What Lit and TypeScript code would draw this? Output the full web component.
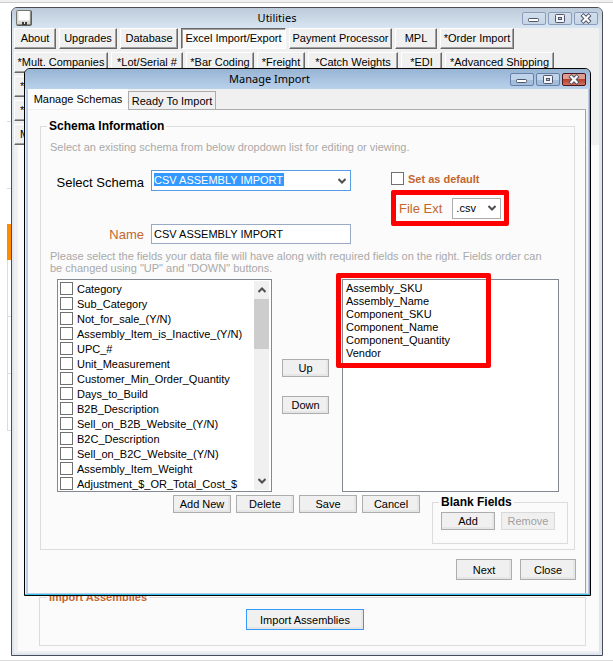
import { LitElement, html, css, svg } from "lit";
import { customElement, property } from "lit/decorators.js";

const toolbarRows: { label: string; width: number; active?: boolean }[][] = [
  [
    { label: "About", width: 42 },
    { label: "Upgrades", width: 58 },
    { label: "Database", width: 58 },
    { label: "Excel Import/Export", width: 105, active: true },
    { label: "Payment Processor", width: 103 },
    { label: "MPL", width: 42 },
    { label: "*Order Import", width: 74 },
  ],
  [
    { label: "*Mult. Companies", width: 94 },
    { label: "*Lot/Serial #", width: 72 },
    { label: "*Bar Coding", width: 68 },
    { label: "*Freight", width: 48 },
    { label: "*Catch Weights", width: 90 },
    { label: "*EDI", width: 41 },
    { label: "*Advanced Shipping", width: 109 },
  ],
  [{ label: "*", width: 80 }],
  [{ label: "*", width: 80 }],
  [{ label: "M", width: 80 }],
];

const availableFields = [
  "Category",
  "Sub_Category",
  "Not_for_sale_(Y/N)",
  "Assembly_Item_is_Inactive_(Y/N)",
  "UPC_#",
  "Unit_Measurement",
  "Customer_Min_Order_Quantity",
  "Days_to_Build",
  "B2B_Description",
  "Sell_on_B2B_Website_(Y/N)",
  "B2C_Description",
  "Sell_on_B2C_Website_(Y/N)",
  "Assembly_Item_Weight",
  "Adjustment_$_OR_Total_Cost_$",
];

const requiredFields = [
  "Assembly_SKU",
  "Assembly_Name",
  "Component_SKU",
  "Component_Name",
  "Component_Quantity",
  "Vendor",
];

const base = css`
  * {
    box-sizing: border-box;
  }
  button,
  input,
  select {
    font: inherit;
    color: inherit;
    margin: 0;
    border-radius: 0;
  }
  button {
    padding: 0;
    white-space: nowrap;
  }
  fieldset {
    margin: 0;
    padding: 0;
    min-width: 0;
    border: 1px solid #dcdcdc;
  }
  legend {
    padding: 0 2px;
    font-weight: bold;
    font-size: 12px;
    line-height: 14px;
  }
  .btn {
    height: 18px;
    width: 58px;
    border: 1px solid #adadad;
    background: #f0f0f0;
    box-shadow: inset -2px -2px 0 #e6e6e6;
    color: #000;
    font-size: 11px;
    line-height: 16px;
  }
  .btn:disabled {
    color: #a0a0a0;
    border-color: #d9d9d9;
    box-shadow: none;
  }
`;

@customElement("window-controls")
export class WindowControls extends LitElement {
  @property({ type: Boolean }) active = false;

  static styles = [
    base,
    css`
      :host {
        display: flex;
        gap: 2px;
      }
      button {
        width: 24px;
        height: 13px;
        border: 1px solid #8c9cbc;
        border-radius: 2px;
        background: linear-gradient(#d3dfec, #c6d5e6);
        display: block;
      }
      :host([active]) button {
        border-color: #6781a8;
        background: linear-gradient(#bfd3ea 50%, #a3bddb 50%);
      }
      :host([active]) button.close {
        border-color: #4a1420;
        background: linear-gradient(#dc9c90 45%, #b8412c 50%, #d0725c);
      }
      svg {
        display: block;
        width: 22px;
        height: 11px;
      }
    `,
  ];

  render() {
    const icon = (shape: unknown) =>
      html`<svg viewBox="0 0 22 11" aria-hidden="true">${shape}</svg>`;
    return html`
      <button aria-label="Minimize">
        ${icon(svg`<rect x="5.5" y="5.5" width="10" height="3" rx="0.8" fill="#fff" stroke="#50566a"/>`)}
      </button>
      <button aria-label="Maximize">
        ${icon(svg`<rect x="6.5" y="1.5" width="9" height="8" rx="0.8" fill="#f4f4f8" stroke="#50566a"/>
          <rect x="9.5" y="4.5" width="3" height="2" fill="#b9cbe0" stroke="#50566a"/>`)}
      </button>
      <button class="close" aria-label="Close window">
        ${icon(svg`<path d="M7 1.5 L15 9.5 M15 1.5 L7 9.5" stroke="#50566a" stroke-width="4.2" fill="none"/>
          <path d="M7.6 2 L14.4 9 M14.4 2 L7.6 9" stroke="#fff" stroke-width="2.2" fill="none"/>`)}
      </button>
    `;
  }
}

@customElement("import-dialog")
export class ImportDialog extends LitElement {
  static styles = [
    base,
    css`
      :host {
        display: block;
        border: 1px solid #000;
        border-radius: 6px 6px 0 0;
        background: #b9cfe8;
        padding: 0 2px 2px 3px;
        box-shadow: inset -1px -1px 0 #35c5ea, inset 1px 0 0 #e8f2fb;
        overflow: hidden;
      }
      .title {
        display: flex;
        align-items: center;
        height: 20px;
        margin: 0 -2px 0 -3px;
        padding: 0 4px 0 4px;
        background: linear-gradient(#98b4d4, #b9d1eb);
      }
      h2 {
        flex: 1;
        margin: 0;
        text-align: center;
        font: 11px/18px "Noto Sans", sans-serif;
        color: #000;
      }
      .client {
        background: #f0f0f0;
        padding-right: 2px;
      }
      .tabs {
        display: flex;
        align-items: flex-end;
      }
      .tab {
        border: 0;
        background: #fcfcfc;
        width: 100px;
        height: 20px;
        font-size: 11px;
      }
      .tab.idle {
        background: #f0f0f0;
        border: 1px solid #acacac;
        border-bottom: 0;
        width: 88px;
        height: 18px;
      }
      .panel {
        background: #fbfbfb;
        border-right: 1px solid #a0a0a0;
        padding: 9px 10px 13px 12px;
      }
      .edge {
        height: 1px;
        margin-left: 100px;
        background: #acacac;
      }
      .schema {
        padding-bottom: 5px;
      }
      .schema > legend {
        margin-left: 6px;
      }
      .hint {
        margin: 0 24px 0 9px;
        color: #a9a9a9;
        font-size: 11px;
        line-height: 12px;
      }
      .first {
        padding-top: 8px;
      }
      .form {
        display: flex;
        gap: 40px;
        margin: 17px 0 6px 9px;
      }
      .left {
        display: grid;
        grid-template-columns: 94px 200px;
        grid-template-rows: 21px 20px;
        gap: 33px 7px;
        align-items: center;
        align-content: start;
      }
      .left label,
      .ext label {
        font-size: 13px;
        text-align: right;
        color: #c4662f;
      }
      .left label.dark {
        color: #000;
        padding-top: 4px;
      }
      .combo {
        display: grid;
        align-items: center;
      }
      .combo > * {
        grid-area: 1 / 1;
      }
      .combo svg {
        justify-self: end;
        margin-right: 5px;
        width: 8px;
        height: 6px;
        pointer-events: none;
      }
      select {
        appearance: none;
        width: 100%;
        height: 21px;
        padding: 0 3px;
        border: 1px solid #acacac;
        background-color: #fff;
        font-size: 11px;
        color: #000;
      }
      .picked {
        border-color: #569de5;
        color: #fff;
        padding-left: 2px;
        padding-bottom: 2px;
        background: #fff linear-gradient(#39f, #39f) 2px 2px / 130px 13px
          no-repeat;
      }
      .name {
        width: 100%;
        height: 20px;
        border: 1px solid #9aaac4;
        background: #fff;
        padding: 0 2px;
        font-size: 11px;
        color: #000;
      }
      .right {
        display: flex;
        flex-direction: column;
        align-items: flex-start;
        gap: 5px;
        padding-top: 2px;
      }
      .default {
        display: flex;
        align-items: center;
        gap: 4px;
        height: 13px;
        font-size: 11px;
        font-weight: bold;
        color: #c4662f;
      }
      input[type="checkbox"] {
        appearance: none;
        flex: none;
        width: 13px;
        height: 13px;
        border: 1px solid #707070;
        background: #fff;
      }
      .ext {
        display: flex;
        align-items: center;
        gap: 10px;
        height: 36px;
        width: 118px;
        padding: 0 3px;
        border: 5px solid #f00;
        border-radius: 2px;
      }
      .ext .combo {
        flex: 1;
      }
      .lists {
        display: flex;
        margin: 5px 15px 0 16px;
      }
      .box {
        flex: 1 1 0;
        border: 1px solid #828790;
        background: #fff;
        height: 213px;
        font-size: 11px;
        color: #000;
      }
      ul {
        list-style: none;
        margin: 0;
        padding: 0;
      }
      .available {
        display: flex;
        padding: 1px 2px;
      }
      .available ul {
        flex: 1;
      }
      .available label {
        display: flex;
        align-items: center;
        gap: 4px;
        height: 15px;
        white-space: nowrap;
      }
      .scroll {
        display: flex;
        flex-direction: column;
        align-items: center;
        justify-content: space-between;
        width: 15px;
        background: #f0f0f0;
      }
      .scroll svg {
        width: 8px;
        height: 6px;
        margin: 6px 0;
      }
      .thumb {
        width: 15px;
        height: 50px;
        background: #cdcdcd;
        margin-bottom: auto;
      }
      .order {
        display: flex;
        flex-direction: column;
        gap: 19px;
        padding: 80px 13px 0 10px;
      }
      .order .btn {
        width: 47px;
      }
      .required {
        position: relative;
        padding: 2px 3px;
        line-height: 13px;
      }
      .available {
        flex-basis: 2px;
      }
      .mark {
        position: absolute;
        left: -7px;
        top: -7px;
        width: 155px;
        height: 95px;
        border: 5px solid #f00;
        border-radius: 2px;
        pointer-events: none;
      }
      .edit {
        display: flex;
        justify-content: flex-end;
        gap: 5px;
        padding: 3px 6px 0 0;
      }
      .blank {
        width: 136px;
        height: 49px;
        margin-left: 7px;
        padding: 3px 0 0 8px;
      }
      .blank legend {
        margin-left: -2px;
      }
      .blank div {
        display: flex;
        gap: 6px;
      }
      .blank .btn {
        width: 54px;
      }
      .footer {
        display: flex;
        justify-content: flex-end;
        gap: 8px;
        padding: 9px 0 0;
        margin-right: -1px;
      }
      .footer .btn {
        width: 56px;
        height: 21px;
      }
    `,
  ];

  private down() {
    return html`<svg viewBox="0 0 8 6" aria-hidden="true">
      <path d="M0.5 1 L4 4.5 L7.5 1" fill="none" stroke="#505050" stroke-width="2"/>
    </svg>`;
  }

  render() {
    return html`
      <div class="title">
        <h2>Manage Import</h2>
        <window-controls active></window-controls>
      </div>
      <div class="client">
        <div class="tabs" role="tablist">
          <button class="tab" role="tab" aria-selected="true">Manage Schemas</button>
          <button class="tab idle" role="tab" aria-selected="false">Ready To Import</button>
        </div>
        <div class="edge"></div>
        <div class="panel">
          <fieldset class="schema">
            <legend>Schema Information</legend>
            <p class="hint first">Select an existing schema from below dropdown list for editing or viewing.</p>
            <div class="form">
              <div class="left">
                <label class="dark" for="schema">Select Schema</label>
                <div class="combo">
                  <select id="schema" class="picked"><option>CSV ASSEMBLY IMPORT</option></select>
                  ${this.down()}
                </div>
                <label for="name">Name</label>
                <input id="name" class="name" type="text" .value=${"CSV ASSEMBLY IMPORT"} />
              </div>
              <div class="right">
                <label class="default"><input type="checkbox" />Set as default</label>
                <div class="ext">
                  <label for="ext">File Ext</label>
                  <div class="combo">
                    <select id="ext"><option>.csv</option></select>
                    ${this.down()}
                  </div>
                </div>
              </div>
            </div>
            <p class="hint">
              Please select the fields your data file will have along with required fields on the right. Fields order can be changed using "UP" and "DOWN" buttons.
            </p>
            <div class="lists">
              <div class="box available">
                <ul>
                  ${availableFields.map(
                    (f) => html`<li><label><input type="checkbox" />${f}</label></li>`
                  )}
                </ul>
                <div class="scroll">
                  <svg viewBox="0 0 8 6" aria-hidden="true">
                    <path d="M0.5 5 L4 1.5 L7.5 5" fill="none" stroke="#505050" stroke-width="2"/>
                  </svg>
                  <div class="thumb"></div>
                  ${this.down()}
                </div>
              </div>
              <div class="order">
                <button class="btn">Up</button>
                <button class="btn">Down</button>
              </div>
              <div class="box required">
                <ul>
                  ${requiredFields.map((f) => html`<li>${f}</li>`)}
                </ul>
                <div class="mark"></div>
              </div>
            </div>
            <div class="edit">
              <button class="btn">Add New</button>
              <button class="btn">Delete</button>
              <button class="btn">Save</button>
              <button class="btn">Cancel</button>
              <fieldset class="blank">
                <legend>Blank Fields</legend>
                <div>
                  <button class="btn">Add</button>
                  <button class="btn" disabled>Remove</button>
                </div>
              </fieldset>
            </div>
          </fieldset>
          <div class="footer">
            <button class="btn">Next</button>
            <button class="btn">Close</button>
          </div>
        </div>
      </div>
    `;
  }
}

@customElement("app-root")
export class AppRoot extends LitElement {
  static styles = [
    base,
    css`
      :host {
        display: flex;
        position: relative;
        box-sizing: border-box;
        min-height: 100vh;
        padding: 7px 10px 6px 11px;
        background: #fff linear-gradient(#f0f0f0 2px, #ccc 2px, #ccc 3px, #fff 3px)
          0 0 / 100% 4px no-repeat;
        font-family: "Liberation Sans", Arial, sans-serif;
        font-size: 11px;
      }
      .rail {
        position: absolute;
        left: 7px;
        top: 121px;
        width: 4px;
      }
      .rail div {
        border-top: 1px solid #dcdcdc;
        height: 57px;
      }
      .rail .tall {
        height: 67px;
      }
      .rail .gap {
        height: 36px;
      }
      .rail .orange {
        height: 36px;
        border: 0;
        background: #ff8c00;
      }
      .rail .cell {
        border: 0;
        border-left: 1px solid #dcdcdc;
        border-bottom: 1px solid #dcdcdc;
      }
      .base {
        position: absolute;
        left: 0;
        right: 0;
        bottom: 1px;
        height: 1px;
        background: #dcdcdc;
      }
      .window {
        position: relative;
        flex: 1;
        display: flex;
        flex-direction: column;
        border: 1px solid #4a4d55;
        border-radius: 6px 6px 0 0;
        background: #dde6f2;
        padding: 0 3px 2px 2px;
      }
      .title {
        display: flex;
        align-items: center;
        height: 20px;
        margin: 0 -3px 0 -2px;
        padding: 0 4px;
        border-radius: 5px 5px 0 0;
        background: linear-gradient(#bccad9, #d8e5f2);
      }
      .title svg {
        width: 16px;
        height: 16px;
      }
      h1 {
        flex: 1;
        margin: 0;
        text-align: center;
        font: 11px/18px "Noto Sans", sans-serif;
        color: #000;
      }
      .client {
        flex: 1;
        display: flex;
        flex-direction: column;
        background: #f0f0f0;
        padding-bottom: 2px;
      }
      nav {
        display: flex;
        flex-direction: column;
        gap: 3px;
      }
      .row {
        display: flex;
        gap: 3px;
      }
      .tool {
        height: 21px;
        border: 1px solid;
        border-color: #fff #696969 #696969 #fff;
        box-shadow: inset -1px -1px 0 #a0a0a0;
        background: #f0f0f0;
        color: #000;
        font-size: 11px;
        line-height: 18px;
        padding-bottom: 1px;
      }
      .tool.star {
        text-align: left;
        padding-left: 5px;
      }
      .tool.active {
        border-color: #696969 #fff #fff #696969;
        box-shadow: inset 1px 1px 0 #a0a0a0;
        background: #fafafa;
      }
      .page {
        flex: 1;
        display: flex;
        align-items: flex-end;
        margin-left: 4px;
        padding: 0 13px 5px 21px;
        background: #fbfbfb;
      }
      .assemblies {
        flex: 1;
        height: 56px;
      }
      .assemblies legend {
        margin-left: 7px;
        font-size: 11px;
        color: #c4662f;
      }
      .assemblies div {
        display: flex;
        justify-content: center;
        padding: 5px 15px 0 0;
      }
      .assemblies .btn {
        width: 118px;
        height: 21px;
        border-color: #39f;
      }
      import-dialog {
        position: absolute;
        left: 12px;
        right: 11px;
        top: 60px;
      }
    `,
  ];

  render() {
    return html`
      <div class="rail">
        <div class="tall"></div>
        <div class="gap"></div>
        <div class="orange"></div>
        <div class="cell"></div>
        <div class="cell"></div>
        <div class="cell"></div>
      </div>
      <div class="base"></div>
      <main class="window">
        <div class="title">
          <svg viewBox="0 0 16 16" aria-hidden="true">
            <rect x="0.5" y="0.5" width="15" height="15" rx="1" fill="#d8d8d4" stroke="#77776f"/>
            <rect x="2.5" y="1" width="11" height="9.5" fill="#fff"/>
            <path d="M15 1 V15 H1" fill="none" stroke="#44443f"/>
            <rect x="6" y="12" width="5" height="3" fill="#3c3c3a"/>
            <rect x="8" y="12" width="1" height="2" fill="#e8e8e8"/>
          </svg>
          <h1>Utilities</h1>
          <window-controls></window-controls>
        </div>
        <div class="client">
          <nav>
            ${toolbarRows.map(
              (row) => html`<div class="row">
                ${row.map(
                  (t) => html`<button
                    class="tool ${t.active ? "active" : ""} ${t.width === 80 ? "star" : ""}"
                    style="width:${t.width}px"
                  >${t.label}</button>`
                )}
              </div>`
            )}
          </nav>
          <section class="page">
            <fieldset class="assemblies">
              <legend>Import Assemblies</legend>
              <div><button class="btn">Import Assemblies</button></div>
            </fieldset>
          </section>
        </div>
        <import-dialog></import-dialog>
      </main>
    `;
  }
}
